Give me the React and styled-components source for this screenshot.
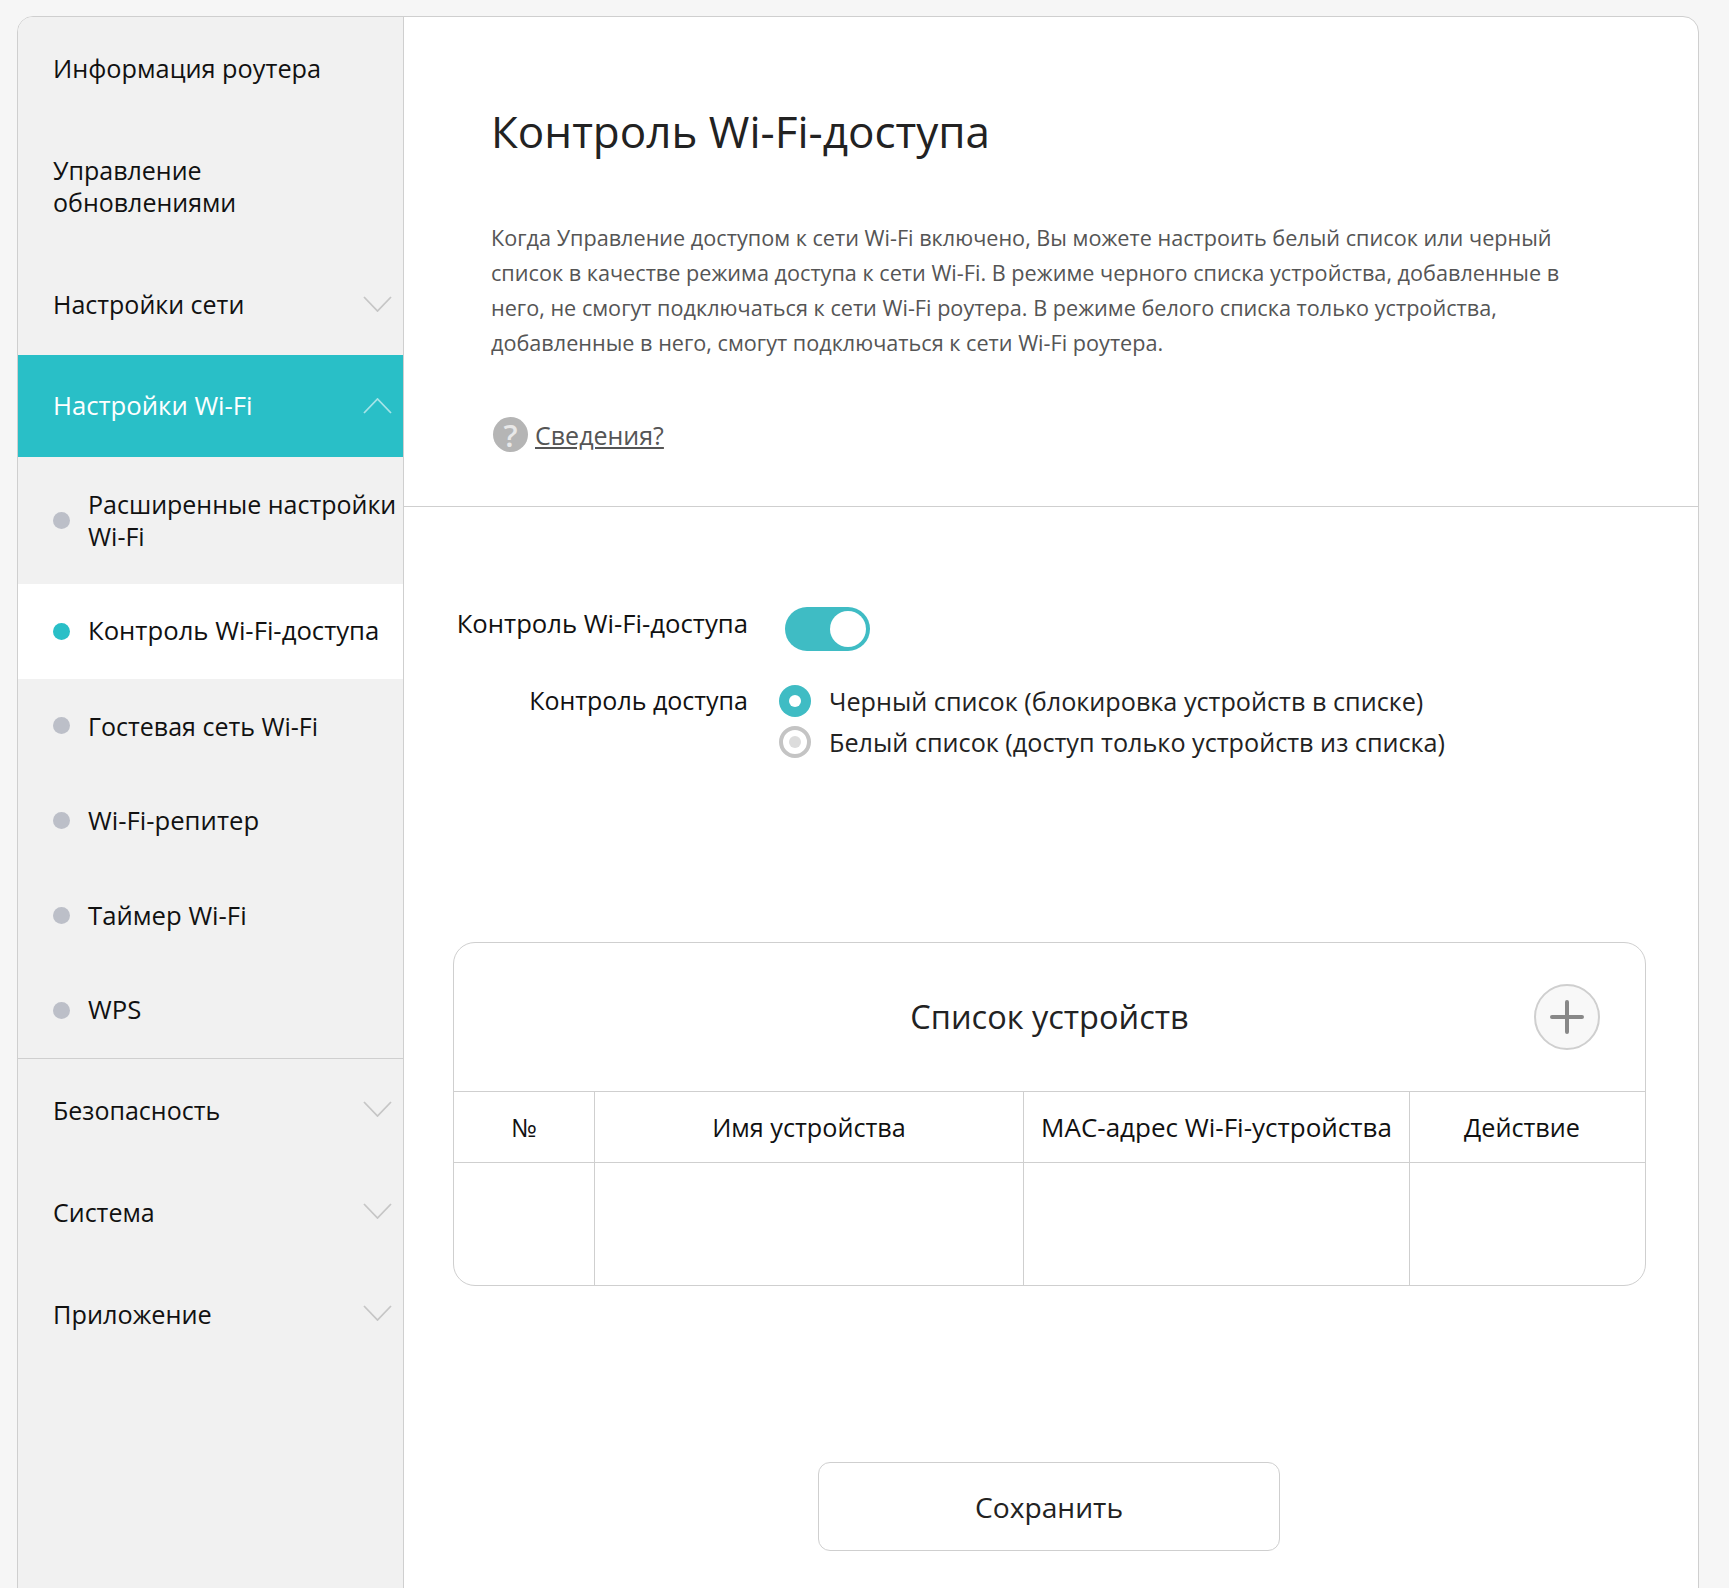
import React from 'react'
import styled, { createGlobalStyle } from 'styled-components'

const GlobalStyle = createGlobalStyle`
  html, body {
    margin: 0;
    padding: 0;
    background: #f6f6f6;
  }
  * {
    box-sizing: border-box;
  }
`

const Page = styled.div`
  height: 1588px;
  overflow: hidden;
  padding: 16px 30px 0 17px;
  font-family: "Open Sans", "Noto Sans", sans-serif;
  font-size: 25px;
  color: #111;
`

const Panel = styled.div`
  display: grid;
  grid-template-columns: 386px 1fr;
  height: 1650px;
  background: #fff;
  border: 1px solid #cfcfcf;
  border-radius: 16px;
  overflow: hidden;
`

const Sidebar = styled.nav`
  background: #f1f1f1;
  border-right: 1px solid #cfcfcf;
`

const NavRow = styled.div`
  display: flex;
  align-items: center;
  justify-content: space-between;
  padding: 35px 11px 35px 35px;
  line-height: 32px;
  font-size: ${(props) => props.wide ? '25.7px' : props.mid ? '25.3px' : 'inherit'};
  background: ${(props) => props.active ? '#29bfc7' : 'transparent'};
  color: ${(props) => props.active ? '#fff' : '#111'};
`

const Chevron = styled.svg`
  width: 29px;
  height: 16px;
  fill: none;
  stroke: ${(props) => props.active ? '#a5e4e8' : '#c6c6c6'};
  stroke-width: 1.8;
  margin-top: -1px;
`

const SubList = styled.div`
  border-bottom: 1px solid #cfcfcf;
`

const SubRow = styled.div`
  display: flex;
  align-items: center;
  gap: 18px;
  padding: 31.4px 0 31.4px 35px;
  line-height: 32px;
  font-size: ${(props) => props.wide ? '25.7px' : 'inherit'};
  background: ${(props) => props.active ? '#fff' : 'transparent'};
`

const Dot = styled.span`
  flex: none;
  width: 17px;
  height: 17px;
  border-radius: 50%;
  background: ${(props) => props.active ? '#29bfc7' : '#bcbfc8'};
`

const Main = styled.main`
  min-width: 0;
`

const Intro = styled.section`
  padding: 87px 87px 54px;
  border-bottom: 1px solid #cfcfcf;
`

const Title = styled.h1`
  margin: 0;
  font-size: 44px;
  font-weight: 400;
  line-height: 54px;
  color: #222;
`

const Description = styled.p`
  margin: 62px 0 0;
  font-size: 21.65px;
  line-height: 35px;
  color: #555;
  white-space: nowrap;
`

const HelpRow = styled.div`
  display: flex;
  align-items: center;
  gap: 7px;
  height: 35px;
  margin-top: 57px;
  margin-left: 2px;
`

const HelpIcon = styled.span`
  display: flex;
  align-items: center;
  justify-content: center;
  width: 35px;
  height: 35px;
  border-radius: 50%;
  background: #b5b5b5;
  color: #e8e8e8;
  font-size: 31px;
  font-weight: 600;
`

const HelpLink = styled.a`
  color: #555;
  text-decoration: underline;
  font-size: 25px;
`

const Form = styled.section`
  display: grid;
  grid-template-columns: 344px 1fr;
  column-gap: 37px;
  padding-top: 100px;
`

const Label = styled.div`
  text-align: right;
  line-height: 32px;
  font-size: ${(props) => props.wide ? '25.7px' : '25px'};
  margin-top: ${(props) => props.top || 0}px;
`

const Toggle = styled.div`
  display: flex;
  justify-content: flex-end;
  align-items: center;
  width: 85px;
  height: 44px;
  padding-right: 4px;
  border-radius: 22px;
  background: #3fbcc4;
`

const Knob = styled.span`
  width: 36px;
  height: 36px;
  border-radius: 50%;
  background: #fff;
`

const RadioGroup = styled.div`
  grid-column: 2;
  margin-left: -6px;
  margin-top: 29px;
`

const RadioRow = styled.div`
  display: flex;
  align-items: center;
  gap: 18px;
  height: 41px;
  font-size: 25.2px;
  color: #222;
`

const Radio = styled.span`
  display: flex;
  align-items: center;
  justify-content: center;
  width: 32px;
  height: 32px;
  border-radius: 50%;
  background: ${(props) => props.checked ? '#3fbcc4' : '#fff'};
  border: ${(props) => props.checked ? 'none' : '4px solid #c4c4c4'};
`

const RadioDot = styled.span`
  width: 12px;
  height: 12px;
  border-radius: 50%;
  background: ${(props) => props.checked ? '#fff' : '#dcdcdc'};
`

const Card = styled.section`
  position: relative;
  margin: 180px 49px 0;
  border: 1px solid #cfcfcf;
  border-radius: 22px;
  width: 1193px;
  overflow: hidden;
`

const CardHeader = styled.div`
  display: flex;
  align-items: center;
  justify-content: center;
  height: 148px;
  padding-bottom: 2px;
  font-size: 32.5px;
  color: #222;
`

const AddButton = styled.button`
  position: absolute;
  top: 41px;
  right: 45px;
  display: flex;
  align-items: center;
  justify-content: center;
  width: 66px;
  height: 66px;
  padding: 0;
  border: 2px solid #cfcfcf;
  border-radius: 50%;
  background: #f8f8f8;
`

const Grid = styled.div`
  display: grid;
  grid-template-columns: 140px 429px 386px 1fr;
  grid-template-rows: 71px 123px;
`

const Cell = styled.div`
  display: flex;
  align-items: center;
  justify-content: center;
  padding-right: ${(props) => props.last ? '11px' : '0'};
  border-top: 1px solid #cfcfcf;
  border-left: ${(props) => props.first ? 'none' : '1px solid #cfcfcf'};
  font-size: ${(props) => props.wide ? '26px' : '25.2px'};
  white-space: nowrap;
`

const SaveButton = styled.button`
  display: block;
  width: 462px;
  height: 89px;
  margin: 176px 0 0 414px;
  border: 1px solid #cfcfcf;
  border-radius: 12px;
  background: #fff;
  font-family: inherit;
  font-size: 28.2px;
  color: #222;
`

const Arrow = ({ up, active }) => (
  <Chevron viewBox="0 0 29 16" active={active}>
    <polyline points={up ? '1,15 14.5,1 28,15' : '1,1 14.5,15 28,1'} />
  </Chevron>
)

const subItems = [
  { name: 'Расширенные настройки Wi-Fi' },
  { name: 'Контроль Wi-Fi-доступа', wide: true, active: true },
  { name: 'Гостевая сеть Wi-Fi' },
  { name: 'Wi-Fi-репитер', wide: true },
  { name: 'Таймер Wi-Fi', wide: true },
  { name: 'WPS', wide: true }
]

const columns = ['№', 'Имя устройства', 'MAC-адрес Wi-Fi-устройства', 'Действие']

const App = () => (
  <Page>
    <GlobalStyle />
    <Panel>
      <Sidebar>
        <NavRow mid>Информация роутера</NavRow>
        <NavRow>Управление<br />обновлениями<span /></NavRow>
        <NavRow>Настройки сети <Arrow /></NavRow>
        <NavRow active wide>Настройки Wi-Fi <Arrow up active /></NavRow>
        <SubList>
          {subItems.map((item) => (
            <SubRow key={item.name} active={item.active} wide={item.wide}>
              <Dot active={item.active} />
              <span>{item.name}</span>
            </SubRow>
          ))}
        </SubList>
        <NavRow>Безопасность <Arrow /></NavRow>
        <NavRow>Система <Arrow /></NavRow>
        <NavRow mid>Приложение <Arrow /></NavRow>
      </Sidebar>
      <Main>
        <Intro>
          <Title>Контроль Wi-Fi-доступа</Title>
          <Description>
            Когда Управление доступом к сети Wi-Fi включено, Вы можете настроить белый список или черный<br />
            список в качестве режима доступа к сети Wi-Fi. В режиме черного списка устройства, добавленные в<br />
            него, не смогут подключаться к сети Wi-Fi роутера. В режиме белого списка только устройства,<br />
            добавленные в него, смогут подключаться к сети Wi-Fi роутера.
          </Description>
          <HelpRow>
            <HelpIcon>?</HelpIcon>
            <HelpLink>Сведения?</HelpLink>
          </HelpRow>
        </Intro>
        <Form>
          <Label wide top={1}>Контроль Wi-Fi-доступа</Label>
          <Toggle><Knob /></Toggle>
          <Label top={33}>Контроль доступа</Label>
          <RadioGroup>
            <RadioRow><Radio checked><RadioDot checked /></Radio>Черный список (блокировка устройств в списке)</RadioRow>
            <RadioRow><Radio><RadioDot /></Radio>Белый список (доступ только устройств из списка)</RadioRow>
          </RadioGroup>
        </Form>
        <Card>
          <CardHeader>Список устройств</CardHeader>
          <AddButton aria-label="Добавить">
            <svg width="34" height="34" viewBox="0 0 34 34" fill="none" stroke="#888" strokeWidth="4" strokeLinecap="round">
              <path d="M17 2v30M2 17h30" />
            </svg>
          </AddButton>
          <Grid>
            {columns.map((name, i) => <Cell key={name} first={i === 0} wide={i === 2} last={i === 3}>{name}</Cell>)}
            {columns.map((name, i) => <Cell key={name} first={i === 0} />)}
          </Grid>
        </Card>
        <SaveButton>Сохранить</SaveButton>
      </Main>
    </Panel>
  </Page>
)

export default App
